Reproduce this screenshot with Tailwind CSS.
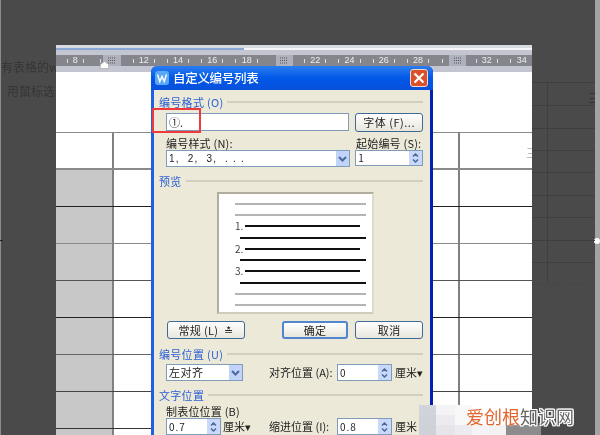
<!DOCTYPE html>
<html lang="zh"><head><meta charset="utf-8">
<script src="https://cdn.jsdelivr.net/npm/@tailwindcss/browser@4"></script>
</head>
<body class="m-0">
<div class="relative w-[600px] h-[435px] overflow-hidden bg-[#4a4a4a] font-['Noto_Sans_CJK_SC','Liberation_Sans',sans-serif] text-[11px] text-[#222] blur-[0.35px]">
  <!-- window edges -->
  <div class="absolute left-0 top-0 w-[1px] h-full bg-[#8c8c8c]"></div>
  <div class="absolute right-0 top-0 w-[5px] h-full bg-[#a3a3a3]"></div>
  <div class="absolute left-[594px] top-[238px] w-[6px] h-[6px] rounded-full bg-white"></div>

  <!-- dimmed text behind the page, left -->
  <div class="absolute left-[1px] top-[58px] w-[55px] h-[50px] text-[#353535] text-[12px] whitespace-nowrap">
    <div class="h-[18px] leading-[18px]">有表格的w</div>
    <div class="h-[6px]"></div>
    <div class="h-[18px] leading-[18px] pl-[6px]">用鼠标选</div>
  </div>
  <div class="absolute left-0 top-[240px] w-[3px] h-[1px] bg-[#222]"></div>

  <!-- dimmed table behind the page, right -->
  <div class="absolute left-[532px] top-[82px] w-[63px] h-[225px] flex flex-col">
    <div class="h-[23px] shrink-0 border-t border-[#3f3f3f]"></div>
    <div class="h-[23px] shrink-0 border-t border-[#3f3f3f]"></div>
    <div class="h-[22px] shrink-0 border-t border-[#3f3f3f]"></div>
    <div class="h-[22px] shrink-0 border-t border-[#3f3f3f]"></div>
    <div class="h-[23px] shrink-0 border-t border-[#3f3f3f]"></div>
    <div class="h-[22px] shrink-0 border-t border-[#3f3f3f]"></div>
    <div class="h-[23px] shrink-0 border-t border-[#3f3f3f]"></div>
    <div class="h-[22px] shrink-0 border-t border-[#3f3f3f]"></div>
    <div class="h-[22px] shrink-0 border-t border-[#3f3f3f]"></div>
    <div class="border-t border-dashed border-[#444]"></div>
  </div>
  <div class="absolute left-[547px] top-[82px] w-[1px] h-[200px] bg-[#3f3f3f]"></div>
  <div class="absolute left-[588px] top-[91px] w-[7px] h-[14px] overflow-hidden text-[12px] leading-[14px] text-[#333]">三</div>

  <!-- document page -->
  <div class="absolute left-[56px] top-[45px] w-[476px] h-[390px] bg-white overflow-hidden flex flex-col">
    <div class="h-[3px] shrink-0 bg-[#d8dbe2]"></div>
    <div class="h-[2px] shrink-0 flex bg-[#f6f6f8]"><div class="w-[188px] bg-[#8aa8d4]"></div></div>
    <div class="h-[5px] shrink-0 bg-[#c3c6d0]"></div>
    <!-- ruler -->
    <div class="h-[11px] shrink-0 flex bg-[#85858d] pl-[2px] text-[#eee] text-[9px] leading-[11px] font-['Liberation_Sans',sans-serif]">
      <div class="w-[34.3px] shrink-0 flex justify-between items-center px-[8.5px]"><i class="w-px h-[4px] bg-[#ddd]"></i><span>8</span><i class="w-px h-[4px] bg-[#ddd]"></i></div>
      <div class="w-[34.3px] shrink-0 flex items-center pl-[8px]"><i class="w-px h-[4px] bg-[#ddd]"></i><span class="w-[18px] h-full ml-[2px] bg-[#aeb0bc] flex items-center justify-center shrink-0"><svg width="8" height="7" viewBox="0 0 8 7"><path d="M0 1h8M0 3.500h8M0 6h8" stroke="#555" stroke-width="1" stroke-dasharray="1 1"/></svg></span></div>
      <div class="w-[34.3px] shrink-0 flex justify-between items-center px-[6px]"><i class="w-px h-[4px] bg-[#ddd]"></i><span>12</span><i class="w-px h-[4px] bg-[#ddd]"></i></div>
      <div class="w-[34.3px] shrink-0 flex justify-between items-center px-[6px]"><i class="w-px h-[4px] bg-[#ddd]"></i><span>14</span><i class="w-px h-[4px] bg-[#ddd]"></i></div>
      <div class="w-[34.3px] shrink-0 flex justify-between items-center px-[6px]"><i class="w-px h-[4px] bg-[#ddd]"></i><span>16</span><i class="w-px h-[4px] bg-[#ddd]"></i></div>
      <div class="w-[34.3px] shrink-0 flex justify-between items-center px-[6px]"><i class="w-px h-[4px] bg-[#ddd]"></i><span>18</span><i class="w-px h-[4px] bg-[#ddd]"></i></div>
      <div class="w-[34.3px] shrink-0 flex items-center pl-[12px]"><span class="w-[17px] h-full bg-[#aeb0bc] flex items-center justify-center shrink-0"><svg width="8" height="7" viewBox="0 0 8 7"><path d="M0 1h8M0 3.500h8M0 6h8" stroke="#555" stroke-width="1" stroke-dasharray="1 1"/></svg></span></div>
      <div class="w-[34.3px] shrink-0 flex justify-between items-center px-[6px]"><i class="w-px h-[4px] bg-[#ddd]"></i><span>22</span><i class="w-px h-[4px] bg-[#ddd]"></i></div>
      <div class="w-[34.3px] shrink-0 flex justify-between items-center px-[6px]"><i class="w-px h-[4px] bg-[#ddd]"></i><span>24</span><i class="w-px h-[4px] bg-[#ddd]"></i></div>
      <div class="w-[34.3px] shrink-0 flex justify-between items-center px-[6px]"><i class="w-px h-[4px] bg-[#ddd]"></i><span>26</span><i class="w-px h-[4px] bg-[#ddd]"></i></div>
      <div class="w-[34.3px] shrink-0 flex justify-between items-center px-[6px]"><i class="w-px h-[4px] bg-[#ddd]"></i><span>28</span><i class="w-px h-[4px] bg-[#ddd]"></i></div>
      <div class="w-[34.3px] shrink-0 flex items-center pl-[7px]"><i class="w-px h-[4px] bg-[#ddd]"></i><span class="w-[17px] h-full ml-[6px] bg-[#aeb0bc] flex items-center justify-center shrink-0"><svg width="8" height="7" viewBox="0 0 8 7"><path d="M0 1h8M0 3.500h8M0 6h8" stroke="#555" stroke-width="1" stroke-dasharray="1 1"/></svg></span></div>
      <div class="w-[34.3px] shrink-0 flex justify-between items-center px-[6px]"><i class="w-px h-[4px] bg-[#ddd]"></i><span>32</span><i class="w-px h-[4px] bg-[#ddd]"></i></div>
      <div class="w-[30px] shrink-0 flex justify-between items-center pl-[6px]"><i class="w-px h-[4px] bg-[#ddd]"></i><span>34</span><i class="w-px h-[4px] bg-[#ddd]"></i></div>
    </div>
    <div class="h-[6px] shrink-0 bg-[#c3c6d0]"></div>
    <div class="h-[60px] shrink-0 bg-white"></div>
    <!-- table -->
    <div class="flex flex-col shrink-0 border-t border-[#8a8a8a]">
      <div class="h-[37px] shrink-0 flex border-b-2 border-[#8a8a8a]"><div class="w-[56px]"></div><div class="w-[346px] border-l-2 border-[#808080]"></div><div class="flex-1 border-l-2 border-[#808080] relative"><span class="absolute right-[-6px] top-[13px] text-[12px] leading-[14px] text-[#bbb]">三</span></div></div>
      <div class="h-[37px] shrink-0 flex border-b border-[#222]"><div class="w-[56px] bg-[#c8c8c8]"></div><div class="w-[346px] border-l-2 border-[#808080]"></div><div class="flex-1 border-l-2 border-[#808080]"></div></div>
      <div class="h-[37px] shrink-0 flex border-b border-[#888]"><div class="w-[56px] bg-[#c8c8c8]"></div><div class="w-[346px] border-l-2 border-[#808080]"></div><div class="flex-1 border-l-2 border-[#808080]"></div></div>
      <div class="h-[37px] shrink-0 flex border-b border-[#555]"><div class="w-[56px] bg-[#c8c8c8]"></div><div class="w-[346px] border-l-2 border-[#808080]"></div><div class="flex-1 border-l-2 border-[#808080]"></div></div>
      <div class="h-[37px] shrink-0 flex border-b border-[#222]"><div class="w-[56px] bg-[#c8c8c8]"></div><div class="w-[346px] border-l-2 border-[#808080]"></div><div class="flex-1 border-l-2 border-[#808080]"></div></div>
      <div class="h-[37px] shrink-0 flex border-b border-[#666]"><div class="w-[56px] bg-[#c8c8c8]"></div><div class="w-[346px] border-l-2 border-[#808080]"></div><div class="flex-1 border-l-2 border-[#808080]"></div></div>
      <div class="h-[37px] shrink-0 flex border-b border-[#444]"><div class="w-[56px] bg-[#c8c8c8]"></div><div class="w-[346px] border-l-2 border-[#808080]"></div><div class="flex-1 border-l-2 border-[#808080]"></div></div>
      <div class="h-[37px] shrink-0 flex border-b border-[#333]"><div class="w-[56px] bg-[#c8c8c8]"></div><div class="w-[346px] border-l-2 border-[#808080]"></div><div class="flex-1 border-l-2 border-[#808080]"></div></div>
      <div class="h-[20px] shrink-0 flex"><div class="w-[56px] bg-[#c8c8c8]"></div><div class="w-[346px] border-l-2 border-[#808080]"></div><div class="flex-1 border-l-2 border-[#808080]"></div></div>
    </div>
  </div>
  <!-- indent marker -->
  <svg class="absolute left-[100px] top-[61px]" width="9" height="8" viewBox="0 0 9 8"><path d="M0.500 3.500L4.500 0.500L8.500 3.500V7.500H0.500Z" fill="#fff" stroke="#bbb"/></svg>

  <!-- dialog -->
  <div class="absolute left-[151px] top-[66px] w-[282px] h-[380px] rounded-t-[6px] bg-[#ece9d8] border-l-[3px] border-l-[#1f5fe6] border-r-[3px] border-r-[#0020b0] flex flex-col">
    <div class="h-[24px] -mx-[3px] shrink-0 rounded-t-[6px] bg-linear-to-b from-[#2a7cf0] via-[#0058e6] to-[#0850dc] flex items-center pl-[4px] pr-[5px]">
      <svg width="14" height="14" viewBox="0 0 14 14" class="shrink-0"><rect width="14" height="14" rx="3" fill="#5aa8f4"/><path d="M2.500 3.500L4.800 10.500L7 5.500L9.200 10.500L11.500 3.500" fill="none" stroke="#fff" stroke-width="1.400"/></svg>
      <span class="ml-[4px] text-[12.500px] tracking-[-0.3px] text-white leading-[24px] font-medium">自定义编号列表</span>
      <div class="ml-auto w-[18px] h-[18px] rounded-[3px] bg-[#d9512c] border border-[#f0d8cc] flex items-center justify-center">
        <svg width="12" height="12" viewBox="0 0 12 12"><path d="M1.500 1.500L10.500 10.500M10.500 1.500L1.500 10.500" stroke="#fff" stroke-width="2.200"/></svg>
      </div>
    </div>
    <div class="shrink-0 pl-[5px] pr-[7px] flex flex-col">
      <!-- group: format -->
      <div class="mt-[4px] h-[16px] flex items-center gap-[4px]"><span class="text-[#2a5fd4] tracking-[0.3px] leading-[16px]">编号格式 (O)</span><i class="flex-1 h-[2px] bg-[#d2cfbe]"></i></div>
      <div class="mt-[3px] ml-[7px] flex gap-[6px] items-start">
        <div class="w-[184px] h-[18px] bg-white border border-[#7f9db9] pl-[2px] leading-[16px] text-[11px]">①.</div>
        <div class="w-[68px] h-[19px] rounded-[3px] border border-[#3d6a96] bg-linear-to-b from-white to-[#e8e6dc] text-center leading-[17px] tracking-[0.5px]">字体 (F)...</div>
      </div>
      <div class="mt-[5px] ml-[7px] flex h-[13px] leading-[13px] tracking-[0.2px]">
        <span class="w-[190px]">编号样式 (N):</span><span class="whitespace-nowrap">起始编号 (S):</span>
      </div>
      <div class="ml-[7px] flex gap-[5px] items-start">
        <div class="w-[185px] h-[17px] bg-white border border-[#7f9db9] flex items-center justify-between pl-[2px]"><span class="tracking-[1.2px] leading-[15px] text-[10px] font-['Liberation_Sans',sans-serif] whitespace-pre">1,  2,  3,  . . .</span>
          <span class="w-[13px] h-[15px] bg-[#c1d2fb] flex items-center justify-center"><svg width="9" height="6" viewBox="0 0 9 6"><path d="M1 1L4.500 4.500L8 1" fill="none" stroke="#4a6a9a" stroke-width="2"/></svg></span></div>
        <div class="w-[68px] h-[16px] bg-white border border-[#7f9db9] flex justify-between pl-[2px]"><span class="leading-[14px] text-[10px]">1</span>
          <span class="w-[13px] h-[14px] bg-[#c9d8fb] flex flex-col items-center justify-center gap-[2px]"><svg width="7" height="4" viewBox="0 0 7 4"><path d="M1 3.500L3.500 1L6 3.500" fill="none" stroke="#4a6a9a" stroke-width="1.500"/></svg><svg width="7" height="4" viewBox="0 0 7 4"><path d="M1 0.500L3.500 3L6 0.500" fill="none" stroke="#4a6a9a" stroke-width="1.500"/></svg></span></div>
      </div>
      <!-- group: preview -->
      <div class="mt-[6px] h-[16px] flex items-center gap-[4px]"><span class="text-[#2a5fd4] tracking-[0.3px] leading-[16px]">预览</span><i class="flex-1 h-[2px] bg-[#d2cfbe]"></i></div>
      <div class="mt-[3px] ml-[58px] w-[157px] h-[122px] bg-white border-2 border-[#b0ad9c] border-r-[#dedbca] border-b-[#cfccbb] pt-[9px] pb-[6px] pl-[16px] pr-[6px] flex flex-col justify-between">
        <i class="block h-[2px] bg-[#b4b4b4]"></i>
        <i class="block h-[2px] bg-[#b4b4b4]"></i>
        <div class="flex h-[2px] items-center"><span class="w-[10px] text-[10px] text-[#444] leading-[2px]">1.</span><i class="w-[115px] h-[2px] bg-[#111]"></i></div>
        <i class="block h-[2px] ml-[5px] bg-[#111]"></i>
        <div class="flex h-[2px] items-center"><span class="w-[10px] text-[10px] text-[#444] leading-[2px]">2.</span><i class="w-[115px] h-[2px] bg-[#111]"></i></div>
        <i class="block h-[2px] ml-[5px] bg-[#111]"></i>
        <div class="flex h-[2px] items-center"><span class="w-[10px] text-[10px] text-[#444] leading-[2px]">3.</span><i class="w-[115px] h-[2px] bg-[#111]"></i></div>
        <i class="block h-[2px] ml-[5px] bg-[#111]"></i>
        <i class="block h-[2px] bg-[#b4b4b4]"></i>
        <i class="block h-[2px] bg-[#b4b4b4]"></i>
      </div>
      <!-- buttons -->
      <div class="mt-[7px] ml-[8px] flex h-[18px] leading-[16px] text-center tracking-[0.3px]">
        <div class="w-[78px] rounded-[3px] border border-[#3d6a96] bg-linear-to-b from-white to-[#e8e6dc] whitespace-nowrap">常规 (L)&nbsp;&nbsp;≛</div>
        <div class="ml-[37px] w-[67px] rounded-[3px] border-2 border-[#4f86cf] bg-linear-to-b from-white to-[#e8e6dc] leading-[14px]">确定</div>
        <div class="ml-[7px] w-[68px] rounded-[3px] border border-[#3d6a96] bg-linear-to-b from-white to-[#e8e6dc]">取消</div>
      </div>
      <!-- group: number position -->
      <div class="mt-[7px] h-[16px] flex items-center gap-[4px]"><span class="text-[#2a5fd4] tracking-[0.3px] leading-[16px]">编号位置 (U)</span><i class="flex-1 h-[2px] bg-[#d2cfbe]"></i></div>
      <div class="mt-[2px] ml-[7px] flex items-center h-[17px]">
        <div class="w-[77px] h-[17px] bg-white border border-[#7f9db9] flex items-center justify-between pl-[2px]"><span class="leading-[15px] tracking-[0.5px]">左对齐</span>
          <span class="w-[13px] h-[15px] bg-[#c1d2fb] flex items-center justify-center"><svg width="9" height="6" viewBox="0 0 9 6"><path d="M1 1L4.500 4.500L8 1" fill="none" stroke="#4a6a9a" stroke-width="2"/></svg></span></div>
        <span class="ml-[26px] w-[68px] whitespace-nowrap">对齐位置 (A):</span>
        <div class="w-[55px] h-[17px] bg-white border border-[#7f9db9] flex justify-between pl-[2px]"><span class="leading-[15px] text-[10px]">0</span>
          <span class="w-[13px] h-[15px] bg-[#c9d8fb] flex flex-col items-center justify-center gap-[2px]"><svg width="7" height="4" viewBox="0 0 7 4"><path d="M1 3.500L3.500 1L6 3.500" fill="none" stroke="#4a6a9a" stroke-width="1.500"/></svg><svg width="7" height="4" viewBox="0 0 7 4"><path d="M1 0.500L3.500 3L6 0.500" fill="none" stroke="#4a6a9a" stroke-width="1.500"/></svg></span></div>
        <span class="ml-[3px] whitespace-nowrap">厘米▾</span>
      </div>
      <!-- group: text position -->
      <div class="mt-[6px] h-[16px] flex items-center gap-[4px]"><span class="text-[#2a5fd4] tracking-[0.3px] leading-[16px]">文字位置</span><i class="flex-1 h-[2px] bg-[#d2cfbe]"></i></div>
      <div class="mt-[2px] ml-[7px] h-[13px] leading-[13px] tracking-[0.2px]">制表位位置 (B)</div>
      <div class="ml-[7px] flex items-center h-[17px]">
        <div class="w-[55px] h-[17px] bg-white border border-[#7f9db9] flex justify-between pl-[2px]"><span class="leading-[15px] text-[10px] tracking-[1px]">0.7</span>
          <span class="w-[13px] h-[15px] bg-[#c9d8fb] flex flex-col items-center justify-center gap-[2px]"><svg width="7" height="4" viewBox="0 0 7 4"><path d="M1 3.500L3.500 1L6 3.500" fill="none" stroke="#4a6a9a" stroke-width="1.500"/></svg><svg width="7" height="4" viewBox="0 0 7 4"><path d="M1 0.500L3.500 3L6 0.500" fill="none" stroke="#4a6a9a" stroke-width="1.500"/></svg></span></div>
        <span class="ml-[2px] w-[46px] whitespace-nowrap">厘米▾</span>
        <span class="w-[68px] whitespace-nowrap">缩进位置 (I):</span>
        <div class="w-[55px] h-[17px] bg-white border border-[#7f9db9] flex justify-between pl-[2px]"><span class="leading-[15px] text-[10px] tracking-[1px]">0.8</span>
          <span class="w-[13px] h-[15px] bg-[#c9d8fb] flex flex-col items-center justify-center gap-[2px]"><svg width="7" height="4" viewBox="0 0 7 4"><path d="M1 3.500L3.500 1L6 3.500" fill="none" stroke="#4a6a9a" stroke-width="1.500"/></svg><svg width="7" height="4" viewBox="0 0 7 4"><path d="M1 0.500L3.500 3L6 0.500" fill="none" stroke="#4a6a9a" stroke-width="1.500"/></svg></span></div>
        <span class="ml-[3px] whitespace-nowrap">厘米</span>
      </div>
    </div>
  </div>

  <!-- red highlight -->
  <div class="absolute left-[152px] top-[108px] w-[49px] h-[25px] border-2 border-[#ee3a3a]"></div>

  <!-- watermark mosaic -->
  <div class="absolute left-[419px] top-[405px] w-[122px] h-[30px] grid grid-cols-[17px_19px_17px_17px_17px_18px_17px] grid-rows-[10px_10px_10px]">
    <div class="bg-[#d2d4dc]"></div><div class="bg-[#f4f4f6]"></div><div class="bg-[#f8f8f8]"></div><div class="bg-white"></div><div class="bg-white"></div><div class="bg-white"></div><div class="bg-transparent"></div>
    <div class="bg-[#d0d2da]"></div><div class="bg-[#ececf0]"></div><div class="bg-[#f8f8f8]"></div><div class="bg-[#fbfbfb]"></div><div class="bg-[#fdfdfd]"></div><div class="bg-white"></div><div class="bg-transparent"></div>
    <div class="bg-[#cfd1d8]"></div><div class="bg-[#e6e6ea]"></div><div class="bg-[#ececf0]"></div><div class="bg-[#f4f4f6]"></div><div class="bg-[#f2f2f2]"></div><div class="bg-[#8c8c8c]"></div><div class="bg-[#8c8c8c]"></div>
  </div>
  <!-- watermark text -->
  <div class="absolute left-[466px] top-[405px] h-[22px] flex text-[18px] leading-[22px] whitespace-nowrap">
    <span class="text-[#e2652e] [text-shadow:0_0_2px_#fff]">爱创根</span>
    <span class="text-[#666] [text-shadow:1px_0_0_#fff,-1px_0_0_#fff,0_1px_0_#fff,0_-1px_0_#fff,1px_1px_0_#fff,-1px_-1px_0_#fff,1px_-1px_0_#fff,-1px_1px_0_#fff]">知识网</span>
  </div>
</div>
</body></html>
